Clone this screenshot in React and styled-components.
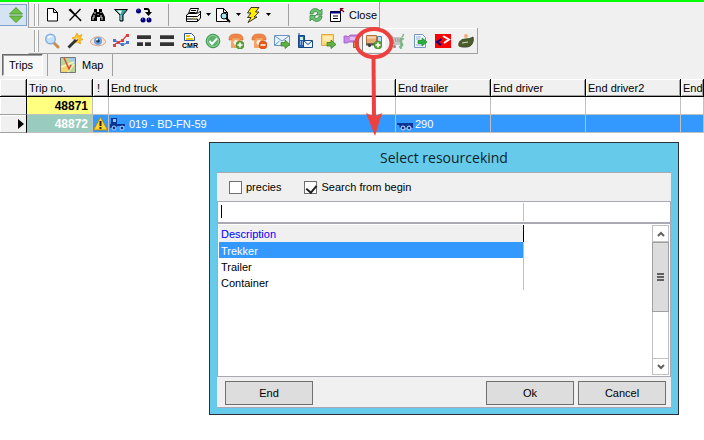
import React, { useState } from "react"
import styled, { createGlobalStyle, css } from "styled-components"

const GlobalStyle = createGlobalStyle`
    * {
        box-sizing: border-box;
    }
    body {
        margin: 0;
        background: #fff;
        color: #000;
        font: 11px/16px "Liberation Sans", Arial, sans-serif;
    }
    button, input {
        font: inherit;
        color: inherit;
    }
`

const Page = styled.div`
    position: relative;
    min-height: 100vh;
    overflow: hidden;
    border-top: 2px solid #00ff00;
`

const Chrome = styled.header`
    background: #f0f0f0;
`

const Band = styled.div`
    display: flex;
    align-items: stretch;
    height: 26px;
`

const Picker = styled.button`
    width: 27px;
    margin: 2px 1px 2px 0;
    padding: 0 3px 0 0;
    display: flex;
    align-items: center;
    justify-content: flex-end;
    background: #d5e3f3;
    border: 1px solid #7da2ce;
    border-left: 0;
`

const Toolbar = styled.div`
    display: flex;
    align-items: center;
    flex: none;
    border-right: 1px solid #a0a0a0;
    border-bottom: 1px solid #a0a0a0;
    border-left: 1px solid ${p => p.$flat ? '#f0f0f0' : '#a0a0a0'};
    box-shadow: inset 0 1px #fff;
    margin-left: ${p => p.$flat ? 28 : 0}px;
`

const Grip = styled.span`
    width: 5px;
    height: 22px;
    margin: 0 ${p => p.$gap}px 0 5px;
    border: solid #a8a8a8;
    border-width: 0 1px;
    background: linear-gradient(90deg, #fff 1px, #f0f0f0 1px, #f0f0f0 2px, #fff 2px);
`

const ToolButton = styled.button`
    display: flex;
    align-items: center;
    justify-content: center;
    gap: 4px;
    flex: none;
    width: ${p => p.$w || 23}px;
    height: 22px;
    padding: 0;
    border: 1px solid transparent;
    background: none;

    ${p => p.$pressed && css`
        background: #f8f8f8;
        border-color: #808080 #fff #fff #808080;
    `}
`

const Divider = styled.span`
    width: 1px;
    height: 22px;
    margin: 0 ${p => p.$gap}px;
    background: #a0a0a0;
`

const Tabs = styled.nav`
    display: flex;
    align-items: center;
    height: 25px;
    padding: 0 0 3px 2px;
`

const Tab = styled.button`
    display: flex;
    align-items: center;
    gap: 6px;
    height: 22px;
    padding: 0 8px 0 7px;
    border: 1px solid transparent;
    background: none;

    ${p => p.$active && css`
        padding: 0 9px 0 6px;
        background: #f8f8f8;
        border-color: #696969 #fff #fff #696969;
        box-shadow: inset 1px 1px #a0a0a0;
    `}
`

const TripTable = styled.table`
    width: 100%;
    min-width: 704px;
    table-layout: fixed;
    border-collapse: separate;
    border-spacing: 0;

    th, td {
        padding: 0 0 0 3px;
        overflow: hidden;
        white-space: nowrap;
        text-align: left;
        font-weight: normal;
    }
    th {
        height: 18px;
        padding-left: 2px;
        background: #f0f0f0;
        border-right: 1px solid #000;
        border-bottom: 1px solid #000;
        box-shadow: inset 1px 1px #fff, inset -1px -1px #a0a0a0;
    }
    td {
        height: 18px;
        border-right: 1px solid #c0c0c0;
        border-bottom: 1px solid #c0c0c0;
    }
    th:nth-child(3) {
        padding-left: 4px;
    }
`

const TripRow = styled.tr`
    background: ${p => p.$selected ? '#3399ff' : '#fff'};
    color: ${p => p.$selected ? '#fff' : '#000'};

    td:first-child {
        padding-left: 18px;
        background: #f0f0f0;
        border-color: #000;
        border-bottom-color: #a0a0a0;
        box-shadow: inset 1px 1px #fff;
    }
    td:nth-child(2) {
        padding-right: 4px;
        font-size: 12px;
        font-weight: bold;
        text-align: right;
        background: ${p => p.$selected ? '#99ccbf' : '#ffff80'};
    }
    td:nth-child(3) {
        padding: 0;
    }
    td:nth-child(n + 4) {
        padding-left: 1px;
    }
`

const CellLine = styled.span`
    display: flex;
    align-items: center;
    gap: ${p => p.$gap || 3}px;
`

const Marker = styled.svg`
    position: absolute;
    top: -2px;
    left: 0;
    pointer-events: none;
`

const Window = styled.section`
    position: absolute;
    top: 140px;
    left: 209px;
    width: 470px;
    padding: 0 7px 6px;
    border: 1px solid #2a2f38;
    background: #66cbea;
`

const Title = styled.h1`
    margin: 0;
    height: 29px;
    font: 14px/30px "Open Sans", "Noto Sans", sans-serif;
    text-align: center;
    color: #10222a;
`

const Panel = styled.div`
    border: solid #a9a9b3;
    border-width: 1px 0;
    background: #f0f0f0;
`

const Options = styled.div`
    display: flex;
    align-items: center;
    gap: 23px;
    height: 28px;
    padding: 0 12px;
`

const Option = styled.label`
    display: flex;
    align-items: center;
    gap: 4px;
`

const Check = styled.input`
    appearance: none;
    position: relative;
    width: 13px;
    height: 13px;
    margin: 0;
    border: 1px solid #707070;
    background: #fff;

    &:checked::after {
        content: "";
        position: absolute;
        left: 3px;
        top: 1px;
        width: 5px;
        height: 8px;
        border: solid #222;
        border-width: 0 2px 2px 0;
        transform: rotate(40deg);
    }
`

const SearchRow = styled.div`
    display: flex;
    position: relative;
    height: 23px;
    border: solid #a9a9b3;
    border-width: 1px 1px 2px;
    background: #fff;
`

const SearchInput = styled.input`
    min-width: 0;
    flex: ${p => p.$w ? `0 0 ${p.$w}px` : 1};
    margin: 1px 0;
    padding: 0 3px;
    border: 0;
    border-right: ${p => p.$w ? '1px solid #c0c0c0' : 0};
    outline: 0;
    background: none;
`

const Caret = styled.span`
    position: absolute;
    left: 3px;
    top: 3px;
    width: 1px;
    height: 13px;
    background: #000;
`

const ListBox = styled.div`
    display: flex;
    justify-content: space-between;
    align-items: flex-start;
    min-height: 153px;
    padding: 1px;
    border: solid #a9a9b3;
    border-width: 0 1px 1px;
    background: #fff;
`

const KindTable = styled.table`
    width: 305px;
    border-spacing: 0;

    th, td {
        padding: 0 2px;
        text-align: left;
        font-weight: normal;
        border-right: 1px solid #c0c0c0;
    }
    th {
        height: 17px;
        color: #0000ff;
        background: #f0f0f0;
        border-right-color: #000;
    }
    td {
        height: 16px;
        padding-top: 2px;
        line-height: 14px;
    }
`

const KindRow = styled.tr`
    background: ${p => p.$selected ? '#3399ff' : '#fff'};
    color: ${p => p.$selected ? '#fff' : '#000'};
`

const Scrollbar = styled.div`
    display: flex;
    flex-direction: column;
    align-self: stretch;
    width: 17px;
    border: 1px solid #c0c0c0;
`

const ScrollArrow = styled.button`
    display: flex;
    align-items: center;
    justify-content: center;
    height: 16px;
    padding: 0;
    border: 0;
    background: #fff;
    border-${p => p.$down ? 'top' : 'bottom'}: 1px solid #c0c0c0;
`

const Thumb = styled.div`
    display: flex;
    align-items: center;
    justify-content: center;
    height: 70px;
    margin: 0 -1px auto;
    border: 1px solid #a0a0a0;
    background: #dcdcdc;
`

const Footer = styled.footer`
    display: flex;
    align-items: center;
    gap: 4px;
    height: 30px;
    padding: 2px 5px 0 8px;
`

const DialogButton = styled.button`
    width: 88px;
    height: 24px;
    padding: 0;
    border: 1px solid #707070;
    background: #dddddd;
    margin-right: ${p => p.$first ? 'auto' : 0};
`

const Icon = ({ children, w = 16, h = 16, ...props }) => (
    <svg width={w} height={h} viewBox={`0 0 ${w} ${h}`} fill="none" aria-hidden="true" {...props}>
        {children}
    </svg>
)

const GreenPlus = ({ minus }) => (
    <>
        <circle cx="12" cy="12" r="4" fill={minus ? '#e8591c' : '#5fa03c'} stroke={minus ? '#c8430c' : '#3f7f28'} strokeWidth=".6" />
        <path d={minus ? 'M9.5 12h5' : 'M9.5 12h5M12 9.5v5'} stroke="#fff" strokeWidth="1.5" />
    </>
)

const Phone = ({ minus }) => (
    <>
        <path d="M1 6C1 2 4 1 8 1s7 1 7 5v1h-4V5H5v2H1z" fill="#ee8745" stroke="#d8692c" strokeWidth=".6" />
        <path d="M3 8l2-3h6l2 3v7H3z" fill="#f5a468" />
        <circle cx="8" cy="9.500" r="2.500" fill="#fff0e2" />
        <GreenPlus minus={minus} />
    </>
)

const GreenArrow = () => (
    <path d="M7 9.500h4V7l5 4.500-5 4v-2.500H7z" fill="#62b045" stroke="#38842a" strokeWidth=".8" />
)

const icons = {
    blank: <path d="M3.500 1.500h6l4 4v8.500H3.500zM9.500 1.500v4h4" fill="#fff" stroke="#000" />,
    remove: <path d="M2 2.500l12 11M3 2l11 12M13.500 2L2.500 13.500" stroke="#000" strokeWidth="1.300" />,
    find: (
        <>
            <path d="M4 2h3v3h2V2h3v3l1 1 2 4v4h-5v-4H7v4H1v-4l2-4 1-1z" fill="#000" />
            <path d="M5 5v2M4 8v3M3 10v3M11 5v1M11 8v3M12 10v3M7.500 7.500h1" stroke="#fff" strokeWidth=".9" />
        </>
    ),
    filter: (
        <>
            <path d="M1.500 2.500h13L10 8v6H7V8z" fill="#35a0a0" stroke="#000" />
            <path d="M4 3.500h5L7.500 7z" fill="#fff" />
            <path d="M8 8v5" stroke="#c8eaea" />
        </>
    ),
    move: (
        <>
            <circle cx="2.500" cy="4" r="2.500" fill="#000080" />
            <circle cx="7" cy="13" r="2.500" fill="#000080" />
            <circle cx="13" cy="13" r="2.500" fill="#000080" />
            <path d="M8 2h3c2 0 2 1 2 3" stroke="#000" strokeWidth="2" />
            <path d="M9 5h7l-3.500 4z" fill="#000" />
            <path d="M1.500 3h1M6 12h1M12 12h1" stroke="#8a8ae0" />
        </>
    ),
    print: (
        <>
            <path d="M5.500 1.500h8l-2 5h-8zM1.500 8l3-2h9l2-2v7l-3 3.500H1.500z" fill="#fff" stroke="#000" />
            <path d="M6 3.500h5M5 5.500h5M1.500 9.500h11l3-3M2 12h10.500v2" stroke="#000" />
            <path d="M8 11h3" stroke="#e0d000" />
        </>
    ),
    preview: (
        <>
            <path d="M1.500 1.500h7l4 4v9h-11zM8.500 1.500v4h4" fill="#fff" stroke="#000" />
            <circle cx="9" cy="9" r="3" fill="#a8e4ee" stroke="#000" />
            <path d="M11 11l4 4" stroke="#000" strokeWidth="2" />
        </>
    ),
    flash: <path d="M6 .500h8L10.500 5H14l-5 5h3L3 15.500 6 10.500H2.500L6 6H2.500z" fill="#ffee00" stroke="#222" strokeWidth=".9" />,
    refresh: (
        <>
            <path d="M2 7c0-6 7-7 10-3l2-2v6H8l2-2C8 3.500 5 5 5 7z" fill="#6bbf72" stroke="#358b43" strokeWidth=".8" />
            <path d="M14 9c0 6-7 7-10 3l-2 2V8.500h6L6 10c2 2.500 5 1 5-1z" fill="#6bbf72" stroke="#358b43" strokeWidth=".8" />
        </>
    ),
    closeForm: (
        <>
            <path d="M1.500 4.500h10v10h-10z" fill="#fff" stroke="#000" />
            <path d="M1 5.500h11" stroke="#000080" strokeWidth="2" />
            <path d="M4 9h5M4 11.500h5" stroke="#000" />
            <path d="M11.500 1.500h3M11.500 1v3M12 2l3 3" stroke="#800020" strokeWidth="1.200" />
        </>
    ),
    zoom: (
        <>
            <path d="M10 10l4 4" stroke="#c88d4c" strokeWidth="3" strokeLinecap="round" />
            <circle cx="6.500" cy="6" r="4.800" fill="#c5e2fa" stroke="#86afe0" strokeWidth="1.400" />
            <path d="M4 5c1-2 3-2 4-1" stroke="#fff" strokeWidth="1.300" />
        </>
    ),
    wizard: (
        <>
            <path d="M10 0l1.500 3L15 1.500 13.500 5l2.500 1.500-3 1 .5 3.500-3-2-3 1V7L5 5l3-1z" fill="#ffc51c" stroke="#e79a12" strokeWidth=".7" />
            <path d="M1.500 14.500L10 6" stroke="#333" strokeWidth="2.800" />
            <path d="M8.500 6.500L10 5" stroke="#ddd" strokeWidth="2" />
        </>
    ),
    eye: (
        <>
            <path d="M0 9c3-7 13-7 16 0-3 5-13 5-16 0z" fill="#f4e4dc" stroke="#d9a58c" />
            <circle cx="8" cy="8" r="4" fill="#6fa5df" />
            <circle cx="8" cy="8" r="1.800" fill="#25364d" />
            <circle cx="7" cy="6.500" r="1" fill="#fff" />
        </>
    ),
    chart: (
        <>
            <path d="M1 7l4 2 4 3 5-2" stroke="#4a78d0" strokeWidth="1.300" />
            <path d="M1 12l4-3 4-1 5-6" stroke="#e04040" strokeWidth="1.300" />
            <path d="M0 6h3v3H0zM8 10h3v3H8zM13 8h3v3h-3z" fill="#4a78d0" />
            <path d="M0 11h3v3H0zM4 8h3v3H4zM8 6h3v3H8zM13 1h3v3h-3z" fill="#e04040" />
        </>
    ),
    split: (
        <>
            <path d="M1 2h14v4H1zM1 9h6v4H1zM9 9h6v4H9z" fill="#333" />
            <path d="M1 2.500h14M1 9.500h6M9 9.500h6" stroke="#666" />
        </>
    ),
    rows: (
        <>
            <path d="M1 2h14v4H1zM1 9h14v4H1z" fill="#333" />
            <path d="M1 2.500h14M1 9.500h14" stroke="#666" />
        </>
    ),
    accept: (
        <>
            <circle cx="8" cy="8" r="6.800" fill="#59b269" stroke="#3b9650" />
            <circle cx="8" cy="8" r="5.500" stroke="#a2d7a8" strokeWidth=".8" />
            <path d="M4.500 8l2.500 3 5-5.500" stroke="#fff" strokeWidth="2" />
        </>
    ),
    phoneAdd: <Phone />,
    phoneRemove: <Phone minus />,
    mail: (
        <>
            <path d="M.500 2.500h15v10H.500z" fill="#eaf3fc" stroke="#6893c4" />
            <path d="M1 3l7 5 7-5M1 12l4.500-4" stroke="#6893c4" />
            <GreenArrow />
        </>
    ),
    mobile: (
        <>
            <path d="M2 0v3M1.500 2.500h6v12h-6z" fill="#2460b4" stroke="#174785" />
            <path d="M3 4h3v3H3z" fill="#c9f0d8" />
            <path d="M3 9h1M5 9h1M3 11h1M5 11h1" stroke="#fff" />
            <path d="M6.500 7.500h9v7h-9z" fill="#eef5fd" stroke="#174785" />
            <path d="M7 8l4 3.500L15 8" stroke="#174785" />
        </>
    ),
    note: (
        <>
            <path d="M1.500 1.500h12v8l-3 3h-9z" fill="#ffd87c" stroke="#e3a53c" />
            <path d="M3 3h9v5H3z" fill="#ffeab0" />
            <GreenArrow />
        </>
    ),
    ticket: (
        <>
            <path d="M1 3h3l1 1 2-2h9v7H6L4 10H1z" fill="#c58ae8" stroke="#9a55c4" strokeWidth=".8" />
            <path d="M7 4h6v3H7z" fill="#e2bdf6" />
            <path d="M10.500 8.500h5v6h-5z" fill="#d79a58" stroke="#9b6428" />
        </>
    ),
    truckAdd: (
        <>
            <path d="M.500 2.500h10v8H.500z" fill="#e5ac74" stroke="#ad7542" />
            <path d="M1 4.500h9" stroke="#f8d5ae" strokeWidth="2" />
            <path d="M11.500 3.500h4v8h-4z" fill="#bcdcfa" stroke="#4583c9" />
            <path d="M0 11.500h13" stroke="#555" strokeWidth="2" />
            <circle cx="3.500" cy="12.500" r="1.500" fill="#333" />
            <GreenPlus />
        </>
    ),
    cart: (
        <>
            <path d="M1 3h2l2 8h7M3.500 5h10l-1 4H5M6 5l1 4M9 5v4M12 5l-1 4M4 7h9" stroke="#9b9b9b" />
            <circle cx="5.500" cy="13.500" r="1.500" fill="#8a8a8a" />
            <path d="M14 1c1 1 0 2-1 3M15 6c-3-1-5 1-3 3s3 4-2 5M12 5v11" stroke="#76b882" strokeWidth="1.600" />
        </>
    ),
    exportPage: (
        <>
            <path d="M2.500 1.500h8l3 3v10h-11z" fill="#f2f7fd" stroke="#7696c0" />
            <path d="M4 4h5M4 6h4M4 12h6" stroke="#93afd4" />
            <path d="M6 7.500h4V5l5 4-5 4v-2.500H6z" fill="#28b43c" stroke="#128424" strokeWidth=".7" />
        </>
    ),
    code: (
        <>
            <path d="M0 1h16v14H0z" fill="#ff0000" />
            <path d="M6.500 6L2 9l4 3" stroke="#000080" strokeWidth="2" />
            <path d="M8 3l6 3.500L9 10" stroke="#fff" strokeWidth="2" />
        </>
    ),
    leaf: (
        <>
            <circle cx="8" cy="3" r="2" fill="#f5ae7b" />
            <path d="M1 13c-1-5 3-7 7-7 3 0 5-1 7-2 1 5-1 10-7 10-3 0-5 0-7-1z" fill="#4d5c2c" stroke="#3a4820" />
            <path d="M4 10l6-1" stroke="#d9dfc4" />
        </>
    ),
}

const CmrIcon = () => (
    <Icon>
        <path d="M2.500.500h7l3 3v4h-10z" fill="#fff" stroke="#3050a0" />
        <path d="M4 3h4M4 6h7" stroke="#e8c800" strokeWidth="2" />
        <text x="8" y="15" textAnchor="middle" fill="#000" fontSize="7" fontWeight="bold" fontFamily="Liberation Sans, sans-serif">CMR</text>
    </Icon>
)

const DropArrow = () => <Icon w={5} h={3}><path d="M0 0h5L2.500 3z" fill="#000" /></Icon>

const tools = [
    ['zoom', 'Search'], ['wizard', 'Wizard'], ['eye', 'View'], ['chart', 'Chart'], ['split', 'Split'], ['rows', 'Merge'],
    ['cmr', 'Waybill'], ['accept', 'Accept'], ['phoneAdd', 'Add call'], ['phoneRemove', 'Remove call'], ['mail', 'Send mail'],
    ['mobile', 'Send message'], ['note', 'Send note'], ['ticket', 'Ticket'], ['truckAdd', 'Add resource'], ['cart', 'Costs'],
    ['exportPage', 'Export'], ['code', 'Exchange'], ['leaf', 'Emission'],
]

const columns = ['', 'Trip no.', '!', 'End truck', 'End trailer', 'End driver', 'End driver2', 'End']
const widths = [27, 66, 16, 287, 95, 95, 95]
const kinds = ['Trekker', 'Trailer', 'Container']

const MainToolbar = () => (
    <Toolbar>
        <Grip $gap={1} />
        {['blank', 'remove', 'find', 'filter', 'move'].map((name) => (
            <ToolButton key={name} aria-label={name}>
                <Icon>{icons[name]}</Icon>
            </ToolButton>
        ))}
        <Divider $gap={13} />
        {['print', 'preview', 'flash'].map((name) => (
            <React.Fragment key={name}>
                <ToolButton $w={22} aria-label={name}>
                    <Icon>{icons[name]}</Icon>
                </ToolButton>
                <ToolButton $w={8} aria-label={`${name} options`}>
                    <DropArrow />
                </ToolButton>
            </React.Fragment>
        ))}
        <Divider $gap={16} />
        <ToolButton $w={22} aria-label="refresh">
            <Icon>{icons.refresh}</Icon>
        </ToolButton>
        <ToolButton $w={52}>
            <Icon>{icons.closeForm}</Icon>
            Close
        </ToolButton>
    </Toolbar>
)

const TripToolbar = () => (
    <Toolbar $flat>
        <Grip $gap={1} />
        {tools.map(([name, label]) => (
            <ToolButton key={name} aria-label={label} $pressed={name === 'truckAdd'}>
                {name === 'cmr' ? <CmrIcon /> : <Icon>{icons[name]}</Icon>}
            </ToolButton>
        ))}
    </Toolbar>
)

const Trips = () => (
    <TripTable>
        <colgroup>
            {widths.map((width, i) => <col key={i} width={width} />)}
            <col />
        </colgroup>
        <thead>
            <tr>{columns.map((text) => <th key={text}>{text}</th>)}</tr>
        </thead>
        <tbody>
            <TripRow>
                <td /><td>48871</td><td /><td /><td /><td /><td /><td />
            </TripRow>
            <TripRow $selected>
                <td>
                    <CellLine><Icon w={6} h={10}><path d="M0 0l6 5-6 5z" fill="#000" /></Icon></CellLine>
                </td>
                <td>48872</td>
                <td>
                    <CellLine>
                        <Icon w={15} h={15}>
                            <path d="M7.500 1L14.500 14H.500z" fill="#ffd428" stroke="#a88a28" strokeLinejoin="round" />
                            <path d="M7.500 5v5M7.500 11v2" stroke="#222" strokeWidth="2" />
                        </Icon>
                    </CellLine>
                </td>
                <td>
                    <CellLine>
                        <Icon>
                            <path d="M1 2h6v6h8v2H7l-1 2H0V8h1z" fill="#0b3595" />
                            <path d="M3 3h3v3H3z" fill="#8cc4ff" />
                            <g fill="#0b3595" stroke="#b9d8ff"><circle cx="4" cy="12" r="2" /><circle cx="12" cy="12" r="2" /></g>
                        </Icon>
                        019 - BD-FN-59
                    </CellLine>
                </td>
                <td>
                    <CellLine $gap={2}>
                        <Icon>
                            <path d="M0 7h16v5H3l-1-3H0z" fill="#0b3595" />
                            <g fill="#0b3595" stroke="#d5e8ff"><circle cx="6" cy="12" r="2" /><circle cx="12" cy="12" r="2" /></g>
                        </Icon>
                        290
                    </CellLine>
                </td>
                <td /><td /><td />
            </TripRow>
        </tbody>
    </TripTable>
)

const ResourceDialog = () => {
    const [exact, setExact] = useState(false)
    const [begin, setBegin] = useState(true)
    const [query, setQuery] = useState('')
    const [kind, setKind] = useState('Trekker')

    return (
        <Window role="dialog" aria-labelledby="dialog-title">
            <Title id="dialog-title">Select resourcekind</Title>
            <Panel>
                <Options>
                    <Option>
                        <Check type="checkbox" checked={exact} onChange={(e) => setExact(e.target.checked)} />
                        precies
                    </Option>
                    <Option>
                        <Check type="checkbox" checked={begin} onChange={(e) => setBegin(e.target.checked)} />
                        Search from begin
                    </Option>
                </Options>
                <SearchRow>
                    <SearchInput $w={306} aria-label="Description" value={query} onChange={(e) => setQuery(e.target.value)} />
                    <SearchInput aria-label="Filter" />
                    {!query && <Caret />}
                </SearchRow>
                <ListBox>
                    <KindTable>
                        <thead>
                            <tr><th>Description</th></tr>
                        </thead>
                        <tbody>
                            {kinds.map((name) => (
                                <KindRow key={name} $selected={name === kind} onClick={() => setKind(name)}>
                                    <td>{name}</td>
                                </KindRow>
                            ))}
                        </tbody>
                    </KindTable>
                    <Scrollbar>
                        <ScrollArrow aria-label="Scroll up">
                            <Icon w={8} h={6}><path d="M1 5l3-3 3 3" stroke="#606060" strokeWidth="2" /></Icon>
                        </ScrollArrow>
                        <Thumb>
                            <Icon w={7} h={8}><path d="M0 1h7M0 4h7M0 7h7" stroke="#606060" strokeWidth="2" /></Icon>
                        </Thumb>
                        <ScrollArrow $down aria-label="Scroll down">
                            <Icon w={8} h={6}><path d="M1 1l3 3 3-3" stroke="#606060" strokeWidth="2" /></Icon>
                        </ScrollArrow>
                    </Scrollbar>
                </ListBox>
                <Footer>
                    <DialogButton $first>End</DialogButton>
                    <DialogButton>Ok</DialogButton>
                    <DialogButton>Cancel</DialogButton>
                </Footer>
            </Panel>
        </Window>
    )
}

const App = () => (
    <>
        <GlobalStyle />
        <Page>
            <Chrome>
                <Band>
                    <Picker aria-label="Select view">
                        <Icon w={14} h={16}>
                            <path d="M7 .500L13.500 7H.500zM.500 9h13L7 15.500z" fill="#6fc043" stroke="#4f9a35" />
                        </Icon>
                    </Picker>
                    <MainToolbar />
                </Band>
                <Band>
                    <TripToolbar />
                </Band>
                <Tabs>
                    <Tab $active>Trips</Tab>
                    <Divider $gap={4} />
                    <Tab>
                        <Icon>
                            <path d="M.500.500h15v15H.500z" fill="#b9d69a" stroke="#777" />
                            <path d="M9 1h6v7z" fill="#a0c8ee" />
                            <path d="M1 11l5-3 4 7H1z" fill="#f2d76a" />
                            <path d="M1 10L14 5M8 15l6-8" stroke="#fff3b0" strokeWidth="1.500" />
                            <path d="M4 1l5 11 2-4" stroke="#e04a35" strokeWidth="1.500" />
                        </Icon>
                        Map
                    </Tab>
                    <Divider $gap={0} />
                </Tabs>
            </Chrome>
            <Trips />
            <ResourceDialog />
            <Marker width="400" height="140" fill="none" aria-hidden="true">
                <ellipse cx="374" cy="43" rx="17.500" ry="14" stroke="#ef4040" strokeWidth="4" />
                <path d="M373.500 57l.5 62" stroke="#ef4040" strokeWidth="4" />
                <path d="M366 113l8 4 8-4-7 23z" fill="#ef4040" />
            </Marker>
        </Page>
    </>
)

export default App
